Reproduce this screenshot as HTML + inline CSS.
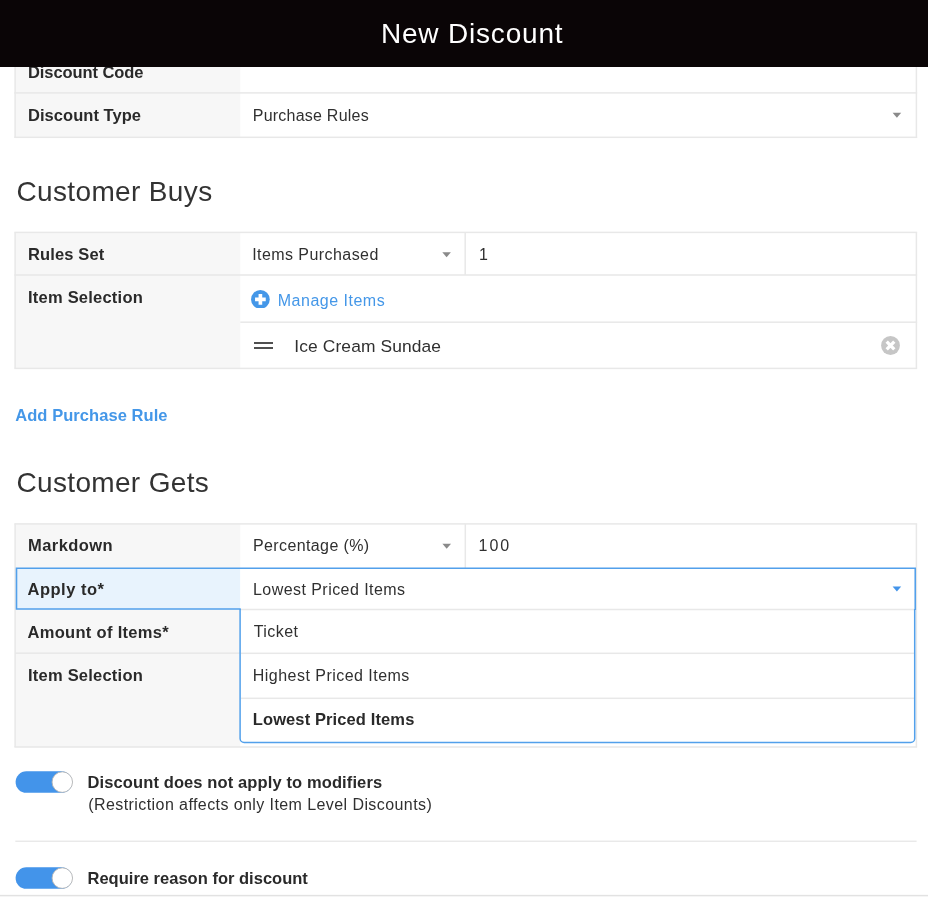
<!DOCTYPE html>
<html lang="en">
<head>
<meta charset="utf-8">
<title>New Discount</title>
<style>
*{box-sizing:border-box;margin:0;padding:0}
html,body{width:928px;height:901px;overflow:hidden;background:#fff}
body{position:relative;font-family:"Liberation Sans",sans-serif;color:#333;font-size:16px}
.a{position:absolute}
.t{position:absolute;white-space:nowrap}
</style>
</head>
<body>

<!-- header -->
<div class="a" style="left:0;top:0;width:928px;height:67px;background:#0a0506;z-index:10"></div>

<div class="a" style="left:0;top:0;width:928px;height:67px;will-change:transform;z-index:20"><div class="t" style="left:380.90px;top:16px;font-size:28px;line-height:36px;color:#ffffff;letter-spacing:0.818px">New Discount</div></div>

<!-- lines / backgrounds -->
<svg class="a" style="left:0;top:0" width="928" height="901" viewBox="0 0 928 901">
<rect x="15.1" y="60" width="225.20000000000002" height="77.30000000000001" fill="#f7f7f7"/>
<rect x="15.1" y="232.4" width="225.20000000000002" height="135.99999999999997" fill="#f7f7f7"/>
<rect x="15.1" y="523.9" width="225.20000000000002" height="223.10000000000002" fill="#f7f7f7"/>
<rect x="14.35" y="60" width="1.5" height="78.00" fill="#e8e8e8"/>
<rect x="915.65" y="60" width="1.5" height="78.00" fill="#e8e8e8"/>
<rect x="14.35" y="92.15" width="902.80" height="1.5" fill="#e8e8e8"/>
<rect x="14.35" y="136.55" width="902.80" height="1.5" fill="#e8e8e8"/>
<rect x="14.35" y="231.65" width="902.80" height="1.5" fill="#e8e8e8"/>
<rect x="14.35" y="274.25" width="902.80" height="1.5" fill="#e8e8e8"/>
<rect x="240.3" y="321.45" width="676.85" height="1.5" fill="#e8e8e8"/>
<rect x="14.35" y="367.65" width="902.80" height="1.5" fill="#e8e8e8"/>
<rect x="14.35" y="232.4" width="1.5" height="136.00" fill="#e8e8e8"/>
<rect x="915.65" y="232.4" width="1.5" height="136.00" fill="#e8e8e8"/>
<rect x="464.45" y="232.4" width="1.5" height="42.60" fill="#e8e8e8"/>
<rect x="14.35" y="523.15" width="902.80" height="1.5" fill="#e8e8e8"/>
<rect x="14.35" y="746.25" width="902.80" height="1.5" fill="#e8e8e8"/>
<rect x="14.35" y="523.9" width="1.5" height="223.10" fill="#e8e8e8"/>
<rect x="915.65" y="523.9" width="1.5" height="223.10" fill="#e8e8e8"/>
<rect x="464.55" y="523.9" width="1.5" height="44.10" fill="#e8e8e8"/>
<rect x="15.1" y="652.45" width="225.20" height="1.5" fill="#e8e8e8"/>
<rect x="16.5" y="568.2" width="223.8" height="40.8" fill="#e8f3fd"/>
<rect x="240.3" y="568.2" width="675" height="41.3" fill="#fff"/>
<path d="M240.1 609 V738.5 a4 4 0 0 0 4 4 H910.7 a4 4 0 0 0 4 -4 V609 Z" fill="#fff"/>
<rect x="240.8" y="608.75" width="673.90" height="1.5" fill="#e8e8e8"/>
<rect x="240.8" y="652.55" width="673.40" height="1.5" fill="#e8e8e8"/>
<rect x="240.8" y="697.55" width="673.40" height="1.5" fill="#e8e8e8"/>
<path d="M240.1 609 V738.5 a4 4 0 0 0 4 4 H910.7 a4 4 0 0 0 4 -4 V609" fill="none" stroke="#52a0eb" stroke-width="1.5"/>
<path d="M240.8 609 H16.5 V568.2 H915.25 V610" fill="none" stroke="#52a0eb" stroke-width="1.6"/>
<rect x="15.3" y="840.55" width="901.30" height="1.4" fill="#e8e8e8"/>
<rect x="0" y="894.85" width="928.00" height="1.5" fill="#e2e2e2"/>
<rect x="15.6" y="771.35" width="56.6" height="21.5" rx="10.75" fill="#4394ea"/><circle cx="62.3" cy="782.1" r="10.25" fill="#fff" stroke="#b4b4b4" stroke-width="0.9"/>
<rect x="15.6" y="867.35" width="56.6" height="21.5" rx="10.75" fill="#4394ea"/><circle cx="62.3" cy="878.1" r="10.25" fill="#fff" stroke="#b4b4b4" stroke-width="0.9"/>
<path d="M892.6 112.8 h8.6 l-4.3 4.9 z" fill="#8a8a8a"/><path d="M442.3 252.3 h8.6 l-4.3 4.9 z" fill="#8a8a8a"/><path d="M442.4 543.8 h8.6 l-4.3 4.9 z" fill="#8a8a8a"/><path d="M892.6 586.6 h8.6 l-4.3 4.9 z" fill="#4394ea"/>
</svg>

<!-- icons -->
<svg class="a" style="left:251.2px;top:289.5px" width="18.8" height="18.8" viewBox="0 0 19 19"><circle cx="9.5" cy="9.5" r="9.45" fill="#4497e8"/><path d="M9.5 4.1v10.8M4.1 9.5h10.8" stroke="#fff" stroke-width="3.7" stroke-linejoin="round"/></svg>
<div class="a" style="left:254px;top:341.9px;width:19.2px;height:2.5px;background:#505050"></div>
<div class="a" style="left:254px;top:346.9px;width:19.2px;height:2.4px;background:#505050"></div>
<svg class="a" style="left:881px;top:336px" width="19" height="19" viewBox="0 0 19 19"><circle cx="9.5" cy="9.5" r="9.4" fill="#c6c6c6"/><path d="M5.7 5.7l7.6 7.6M13.3 5.7l-7.6 7.6" stroke="#fff" stroke-width="3.3"/></svg>


<div class="a" style="left:0;top:0;width:928px;height:901px;will-change:transform;z-index:5">
<div class="t" style="left:28.00px;top:62px;font-size:16.5px;line-height:20px;color:#2a2a2a;letter-spacing:-0.083px;font-weight:bold">Discount Code</div>
<div class="t" style="left:28.00px;top:105px;font-size:16.5px;line-height:20px;color:#2a2a2a;letter-spacing:0.042px;font-weight:bold">Discount Type</div>
<div class="t" style="left:252.75px;top:106px;font-size:16px;line-height:20px;color:#303030;letter-spacing:0.231px">Purchase Rules</div>
<div class="t" style="left:16.50px;top:174px;font-size:28px;line-height:36px;color:#333333;letter-spacing:0.354px">Customer Buys</div>
<div class="t" style="left:28.00px;top:244px;font-size:16.5px;line-height:20px;color:#2a2a2a;letter-spacing:0.125px;font-weight:bold">Rules Set</div>
<div class="t" style="left:252.20px;top:245px;font-size:16px;line-height:20px;color:#303030;letter-spacing:0.436px">Items Purchased</div>
<div class="t" style="left:479.10px;top:245px;font-size:16px;line-height:20px;color:#303030;letter-spacing:0.000px">1</div>
<div class="t" style="left:28.00px;top:287px;font-size:16.5px;line-height:20px;color:#2a2a2a;letter-spacing:0.223px;font-weight:bold">Item Selection</div>
<div class="t" style="left:277.75px;top:291px;font-size:16px;line-height:20px;color:#4497e8;letter-spacing:0.500px">Manage Items</div>
<div class="t" style="left:294.30px;top:336px;font-size:17.4px;line-height:20px;color:#303030;letter-spacing:0.113px">Ice Cream Sundae</div>
<div class="t" style="left:15.25px;top:405px;font-size:16.5px;line-height:20px;color:#4497e8;letter-spacing:0.062px;font-weight:bold">Add Purchase Rule</div>
<div class="t" style="left:16.50px;top:465px;font-size:28px;line-height:36px;color:#333333;letter-spacing:0.333px">Customer Gets</div>
<div class="t" style="left:28.00px;top:535px;font-size:16.5px;line-height:20px;color:#2a2a2a;letter-spacing:0.443px;font-weight:bold">Markdown</div>
<div class="t" style="left:253.00px;top:536px;font-size:16px;line-height:20px;color:#303030;letter-spacing:0.385px">Percentage (%)</div>
<div class="t" style="left:478.50px;top:536px;font-size:16px;line-height:20px;color:#303030;letter-spacing:2.000px">100</div>
<div class="t" style="left:27.50px;top:579px;font-size:16.5px;line-height:20px;color:#2a2a2a;letter-spacing:0.500px;font-weight:bold">Apply to*</div>
<div class="t" style="left:253.00px;top:580px;font-size:16px;line-height:20px;color:#303030;letter-spacing:0.444px">Lowest Priced Items</div>
<div class="t" style="left:27.50px;top:622px;font-size:16.5px;line-height:20px;color:#2a2a2a;letter-spacing:0.307px;font-weight:bold">Amount of Items*</div>
<div class="t" style="left:28.00px;top:665px;font-size:16.5px;line-height:20px;color:#2a2a2a;letter-spacing:0.223px;font-weight:bold">Item Selection</div>
<div class="t" style="left:253.70px;top:622px;font-size:16px;line-height:20px;color:#303030;letter-spacing:0.460px">Ticket</div>
<div class="t" style="left:252.75px;top:666px;font-size:16px;line-height:20px;color:#303030;letter-spacing:0.474px">Highest Priced Items</div>
<div class="t" style="left:252.75px;top:709px;font-size:16.5px;line-height:20px;color:#2a2a2a;letter-spacing:0.111px;font-weight:bold">Lowest Priced Items</div>
<div class="t" style="left:87.50px;top:772px;font-size:16.5px;line-height:20px;color:#2a2a2a;letter-spacing:0.114px;font-weight:bold">Discount does not apply to modifiers</div>
<div class="t" style="left:88.30px;top:795px;font-size:16px;line-height:20px;color:#303030;letter-spacing:0.417px">(Restriction affects only Item Level Discounts)</div>
<div class="t" style="left:87.50px;top:868px;font-size:16.5px;line-height:20px;color:#2a2a2a;letter-spacing:0.012px;font-weight:bold">Require reason for discount</div>
</div>

</body>
</html>
